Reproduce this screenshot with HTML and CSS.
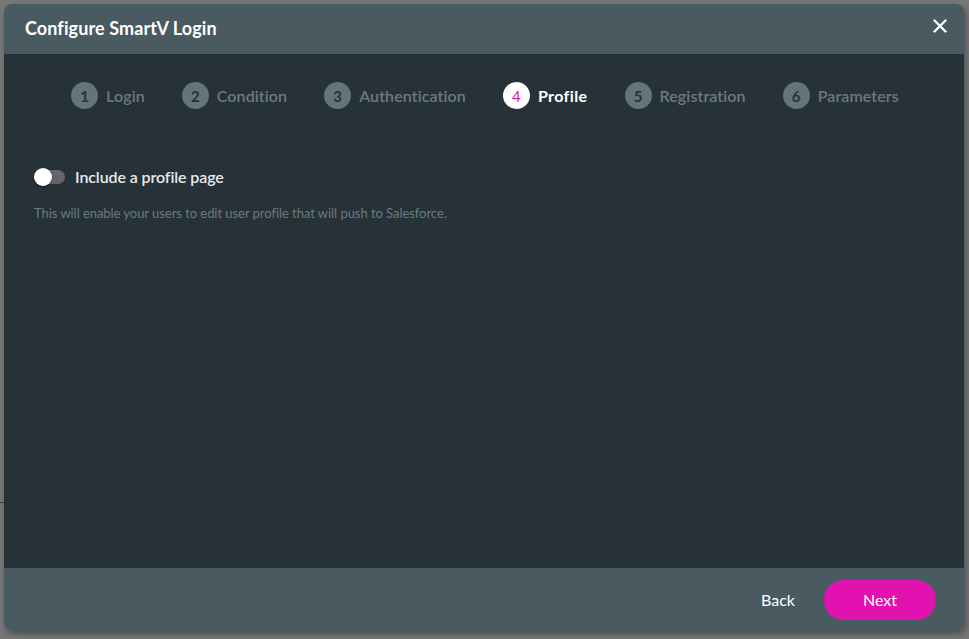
FILE: index.html
```html
<!DOCTYPE html>
<html>
<head>
<meta charset="utf-8">
<link rel="stylesheet" href="styles.css">
</head>
<body>
<div class="backdrop-line"></div>
<div class="modal">
  <div class="modal-header">
    <h1 class="modal-title">Configure SmartV Login</h1>
    <button class="close-btn" aria-label="Close">
      <svg width="14" height="14" viewBox="0 0 14 14"><path d="M1.5 1.5 L12.5 12.5 M12.5 1.5 L1.5 12.5" stroke="#fff" stroke-width="2.4" stroke-linecap="round"/></svg>
    </button>
  </div>
  <div class="modal-body">
    <ol class="stepper">
      <li class="step"><span class="step-num">1</span><span class="step-label">Login</span></li>
      <li class="step"><span class="step-num">2</span><span class="step-label">Condition</span></li>
      <li class="step"><span class="step-num">3</span><span class="step-label">Authentication</span></li>
      <li class="step active"><span class="step-num">4</span><span class="step-label">Profile</span></li>
      <li class="step"><span class="step-num">5</span><span class="step-label">Registration</span></li>
      <li class="step"><span class="step-num">6</span><span class="step-label">Parameters</span></li>
    </ol>
    <div class="option">
      <label class="toggle-row">
        <span class="toggle"><span class="toggle-knob"></span></span>
        <span class="toggle-label">Include a profile page</span>
      </label>
      <p class="option-desc">This will enable your users to edit user profile that will push to Salesforce.</p>
    </div>
  </div>
  <div class="modal-footer">
    <button class="btn-back">Back</button>
    <button class="btn-next">Next</button>
  </div>
</div>
</body>
</html>
```
FILE: styles.css
```css
html, body {
  margin: 0;
  padding: 0;
}
body {
  background: #777777;
  font-family: Lato, "Open Sans", sans-serif;
  width: 969px;
  height: 639px;
  overflow: hidden;
  position: relative;
  padding: 4px;
  box-sizing: border-box;
}
.backdrop-line {
  position: absolute;
  left: 0;
  top: 502px;
  width: 4px;
  height: 1px;
  background: #333b3f;
}
.modal {
  width: 960px;
  height: 627px;
  border-radius: 8px;
  overflow: hidden;
  display: flex;
  flex-direction: column;
  box-shadow: 2px 3px 6px rgba(0,0,0,0.35);
  position: relative;
}
.modal-header {
  height: 50px;
  flex: none;
  background: #4a5a61;
  display: flex;
  align-items: center;
  justify-content: space-between;
  padding: 0 17px 0 21px;
}
.modal-title {
  margin: 0 0 2px 0;
  font-size: 18px;
  font-weight: 700;
  color: #ffffff;
  letter-spacing: 0.1px;
}
.close-btn {
  background: none;
  border: 0;
  padding: 0;
  width: 14px;
  height: 14px;
  display: flex;
  margin-top: -6px;
}
.modal-body {
  flex: 1;
  background: #263238;
  padding: 28px 30px 0 30px;
}
.stepper {
  list-style: none;
  margin: 0;
  padding: 0;
  display: flex;
  justify-content: center;
  gap: 37px;
  padding-left: 2px;
}
.step {
  display: flex;
  align-items: center;
  gap: 8px;
  height: 27px;
}
.step-num {
  width: 27px;
  height: 27px;
  border-radius: 50%;
  background: #65747b;
  color: #263238;
  font-size: 15px;
  font-weight: 700;
  display: flex;
  align-items: center;
  justify-content: center;
}
.step-label {
  font-size: 16px;
  color: #6a7a82;
  font-weight: 600;
  letter-spacing: 0.1px;
}
.step.active .step-num {
  background: #ffffff;
  color: #e112b0;
  font-weight: 400;
}
.step.active .step-label {
  color: #ffffff;
  font-weight: 700;
  letter-spacing: 0.4px;
}
.option {
  margin-top: 58px;
}
.toggle-row {
  display: flex;
  align-items: center;
  gap: 10px;
}
.toggle {
  width: 31px;
  height: 18px;
  position: relative;
  display: block;
}
.toggle::before {
  content: "";
  position: absolute;
  left: 4px;
  right: 0;
  top: 2px;
  height: 14px;
  border-radius: 7px;
  background: #626569;
}
.toggle-knob {
  position: absolute;
  left: 0;
  top: 0;
  width: 18px;
  height: 18px;
  border-radius: 50%;
  background: #ffffff;
  box-shadow: 0 1px 2px rgba(0,0,0,0.4);
}
.toggle-label {
  font-size: 16px;
  color: #e6e9ea;
  font-weight: 600;
  letter-spacing: -0.1px;
}
.option-desc {
  margin: 19px 0 0 0;
  font-size: 13px;
  color: #6b7980;
  letter-spacing: -0.05px;
}
.modal-footer {
  height: 63px;
  flex: none;
  background: #4a5a61;
  display: flex;
  align-items: center;
  justify-content: flex-end;
  padding: 0 28px 0 0;
  gap: 29px;
}
.btn-back {
  background: none;
  border: 0;
  padding: 0;
  color: #ffffff;
  font-family: Lato, sans-serif;
  font-size: 16px;
}
.btn-next {
  width: 112px;
  height: 40px;
  border-radius: 20px;
  border: 0;
  background: #e112b0;
  color: #ffffff;
  font-family: Lato, sans-serif;
  font-size: 16px;
}
```
